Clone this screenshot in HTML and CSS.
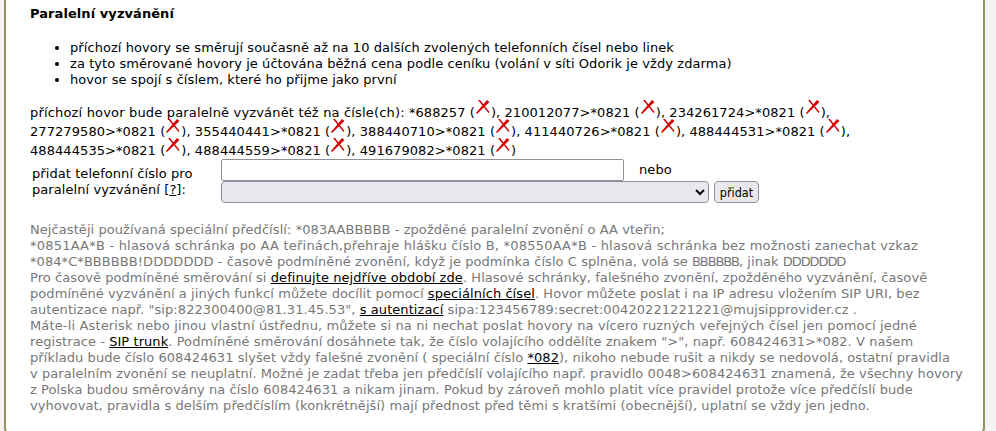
FILE: index.html
```html
<!DOCTYPE html>
<html lang="cs">
<head>
  <meta charset="UTF-8" />
  <title>Paralelní vyzvánění</title>
  <link rel="stylesheet" href="styles.css">
</head>
<body>
  <div class="panel">
    <h4>Paralelní vyzvánění</h4>
    <ul>
      <li>příchozí hovory se směrují současně až na 10 dalších zvolených telefonních čísel nebo linek</li>
      <li>za tyto směrované hovory je účtována běžná cena podle ceníku (volání v síti Odorik je vždy zdarma)</li>
      <li>hovor se spojí s číslem, které ho přijme jako první</li>
    </ul>
    <p class="numbers"><span class="lead">příchozí hovor bude paralelně vyzvánět též na čísle(ch):</span> *688257 (<svg class="del" viewBox="0 0 16 16"><path d="M1 14 12 1l2.500 2L2 15zM3 1h2l9.500 12-1 1z"/></svg>), 210012077&gt;*0821 (<svg class="del" viewBox="0 0 16 16"><path d="M1 14 12 1l2.500 2L2 15zM3 1h2l9.500 12-1 1z"/></svg>), 234261724&gt;*0821 (<svg class="del" viewBox="0 0 16 16"><path d="M1 14 12 1l2.500 2L2 15zM3 1h2l9.500 12-1 1z"/></svg>),<br>277279580&gt;*0821 (<svg class="del" viewBox="0 0 16 16"><path d="M1 14 12 1l2.500 2L2 15zM3 1h2l9.500 12-1 1z"/></svg>), 355440441&gt;*0821 (<svg class="del" viewBox="0 0 16 16"><path d="M1 14 12 1l2.500 2L2 15zM3 1h2l9.500 12-1 1z"/></svg>), 388440710&gt;*0821 (<svg class="del" viewBox="0 0 16 16"><path d="M1 14 12 1l2.500 2L2 15zM3 1h2l9.500 12-1 1z"/></svg>), 411440726&gt;*0821 (<svg class="del" viewBox="0 0 16 16"><path d="M1 14 12 1l2.500 2L2 15zM3 1h2l9.500 12-1 1z"/></svg>), 488444531&gt;*0821 (<svg class="del" viewBox="0 0 16 16"><path d="M1 14 12 1l2.500 2L2 15zM3 1h2l9.500 12-1 1z"/></svg>),<br>488444535&gt;*0821 (<svg class="del" viewBox="0 0 16 16"><path d="M1 14 12 1l2.500 2L2 15zM3 1h2l9.500 12-1 1z"/></svg>), 488444559&gt;*0821 (<svg class="del" viewBox="0 0 16 16"><path d="M1 14 12 1l2.500 2L2 15zM3 1h2l9.500 12-1 1z"/></svg>), 491679082&gt;*0821 (<svg class="del" viewBox="0 0 16 16"><path d="M1 14 12 1l2.500 2L2 15zM3 1h2l9.500 12-1 1z"/></svg>)</p>
    <form class="add-form">
      <label class="add-label">přidat telefonní číslo pro<br>paralelní vyzvánění [<a href="#" class="help">?</a>]:</label>
      <div class="add-fields">
        <div class="field-row">
          <input type="text" class="phone">
          <span class="or">nebo</span>
        </div>
        <div class="field-row">
          <select class="lines"><option></option></select>
          <button type="button" class="add-btn">přidat</button>
        </div>
      </div>
    </form>
    <p class="note">Nejčastěji používaná speciální předčíslí: *083AABBBBB - zpožděné paralelní zvonění o AA vteřin;<br>
    <span class="wide">*0851AA*B - hlasová schránka po AA teřinách,přehraje hlášku číslo B, *08550AA*B - hlasová schránka bez možnosti zanechat vzkaz</span><br>
    *084*C*BBBBBB!DDDDDDD - časově podmíněné zvonění, když je podmínka číslo C splněna, volá se <span class="caps">BBBBBB</span>, jinak <span class="caps">DDDDDDD</span><br>
    Pro časově podmíněné směrování si <a href="#">definujte nejdříve období zde</a>. Hlasové schránky, falešného zvonění, zpožděného vyzvánění, časově<br>
    podmíněné vyzvánění a jiných funkcí můžete docílit pomocí <a href="#">speciálních čísel</a>. Hovor můžete poslat i na IP adresu vložením SIP URI, bez<br>
    autentizace např. "sip:822300400@81.31.45.53", <a href="#">s autentizací</a> sipa:123456789:secret:00420221221221@mujsipprovider.cz .<br>
    <span class="wider">Máte-li Asterisk nebo jinou vlastní ústřednu, můžete si na ni nechat poslat hovory na vícero ruzných veřejných čísel jen pomocí jedné</span><br>
    registrace - <a href="#">SIP trunk</a>. Podmíněné směrování dosáhnete tak, že číslo volajícího oddělíte znakem "&gt;", např. 608424631&gt;*082. V našem<br>
    příkladu bude číslo 608424631 slyšet vždy falešné zvonění ( speciální číslo <a href="#">*082</a>), nikoho nebude rušit a nikdy se nedovolá, ostatní pravidla<br>
    v paralelním zvonění se neuplatní. Možné je zadat třeba jen předčíslí volajícího např. pravidlo 0048&gt;608424631 znamená, že všechny hovory<br>
    z Polska budou směrovány na číslo 608424631 a nikam jinam. Pokud by zároveň mohlo platit více pravidel protože více předčíslí bude<br>
    vyhovovat, pravidla s delším předčíslím (konkrétnější) mají přednost před těmi s kratšími (obecnější), uplatní se vždy jen jedno.</p>
  </div>
</body>
</html>
```

FILE: styles.css
```css
html {
  overflow: hidden;
}

body {
  margin: 0;
  background: #f3f3f3;
  font-family: "DejaVu Sans", Verdana, sans-serif;
  font-size: 13px;
  line-height: 16px;
  letter-spacing: 0.07px;
  color: #000;
}

.panel {
  box-sizing: border-box;
  width: 981px;
  height: 436px;
  margin-left: 4px;
  padding: 6px 8px 0 24px;
  background: #fff;
  border: solid #96905f;
  border-width: 0 2px 2px;
  border-radius: 0 0 8px 8px;
}

h4 {
  margin: 0 0 18px;
  font-size: 13px;
  line-height: 16px;
  font-weight: bold;
}

ul {
  margin: 0 0 15px;
  padding-left: 40px;
}

.numbers {
  margin: 0 0 -1px;
  line-height: 19px;
}

.lead {
  letter-spacing: 0.17px;
}

.del {
  width: 16px;
  height: 16px;
  margin-top: -6px;
  vertical-align: 2px;
}

.del path {
  fill: #d40000;
}

.add-form {
  display: flex;
  margin-bottom: 19px;
}

.add-label {
  width: 189px;
  padding: 7px 0 0 2px;
}

.help {
  color: #000;
}

.field-row {
  display: flex;
  align-items: center;
}

.phone {
  box-sizing: border-box;
  width: 403px;
  height: 22px;
  margin: 0;
  padding: 1px 2px;
  border: 1px solid #8f8f9d;
  border-radius: 2px;
  background: #fff;
}

.or {
  margin-left: 15px;
}

.lines {
  box-sizing: border-box;
  width: 488px;
  height: 22px;
  border: 1px solid #8f8f9d;
  border-radius: 4px;
  background: #e9e9ed;
}

.add-btn {
  box-sizing: border-box;
  width: 45px;
  height: 22px;
  margin-left: 5px;
  padding: 0;
  border: 1px solid #8f8f9d;
  border-radius: 4px;
  background: #e9e9ed;
  font: 12.5px "DejaVu Sans Condensed", "DejaVu Sans", sans-serif;
}

.note {
  margin: 0;
  color: #777;
}

.note a {
  color: #000;
}

.wide {
  letter-spacing: 0.21px;
}

.wider {
  letter-spacing: 0.14px;
}

.caps {
  letter-spacing: -1.1px;
}
```
